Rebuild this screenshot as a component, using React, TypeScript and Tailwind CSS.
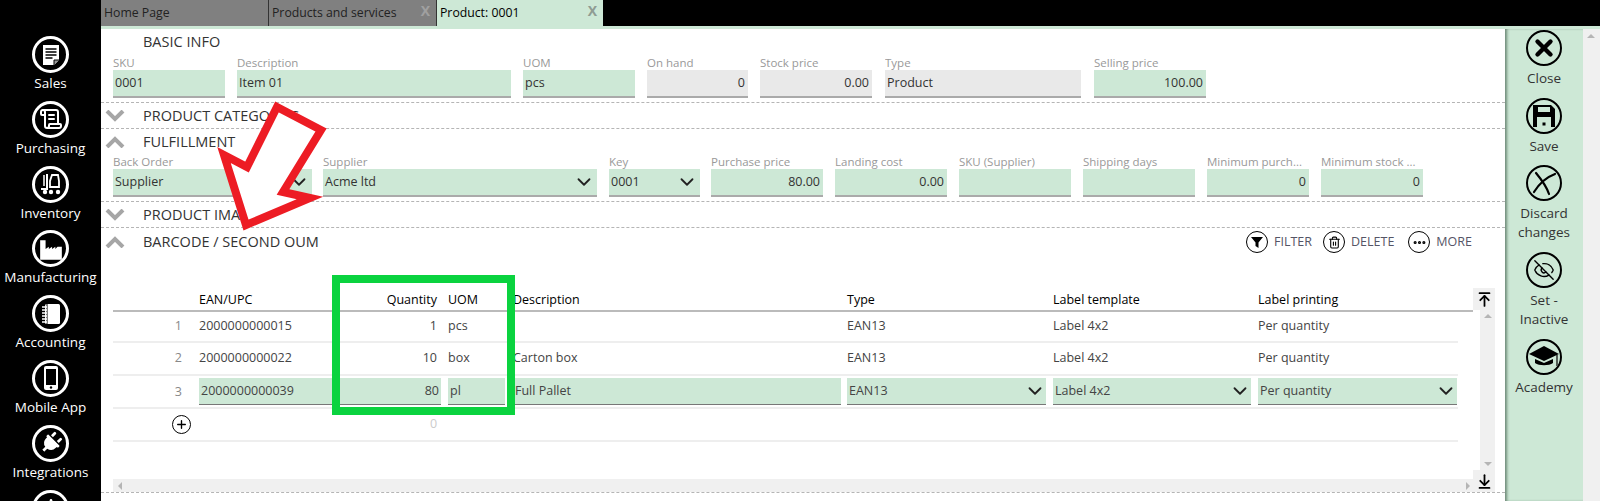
import { ChevronDown, Plus, X, EyeOff, Trash2, MoreHorizontal, ArrowUpToLine, ArrowDownToLine, ScrollText, Settings } from "lucide-react";
import { FaPlug } from "react-icons/fa";
import type { ReactNode } from "react";

const GREEN = "bg-[#cde8d6]";

const SalesIcon = () => (
  <svg width="24" height="24" viewBox="0 0 24 24">
    <path d="M4 2h16v15l-5 5H4z" fill="white" />
    <path d="M6.5 6h11M6.5 9h11M6.5 12h11M6.5 15h7" stroke="black" strokeWidth="1.3" />
    <path d="M15 22v-5h5" fill="#999999" stroke="black" strokeWidth="1" />
  </svg>
);
const ForkliftIcon = () => (
  <svg width="24" height="24" viewBox="0 0 24 24" fill="none" stroke="white" strokeWidth="2">
    <path d="M8 2v15H2" />
    <path d="M5 3v11" strokeWidth="1.5" />
    <path d="M11 15V9l2-6h6l1 6v6z" strokeWidth="1.8" />
    <circle cx="6" cy="20" r="2.2" fill="white" stroke="none" />
    <circle cx="12" cy="20" r="2.2" fill="white" stroke="none" />
    <circle cx="19" cy="20" r="2.2" fill="white" stroke="none" />
  </svg>
);
const FactoryIcon = () => (
  <svg width="26" height="26" viewBox="0 0 24 24">
    <path d="M2 22V4h5v8l3-2v2l3-2v2l3-2v2l2-2h4v12z" fill="white" />
  </svg>
);
const NotebookIcon = () => (
  <svg width="24" height="24" viewBox="0 0 24 24">
    <rect x="6" y="2" width="15" height="20" rx="1.5" fill="white" />
    <path d="M8 2v20" stroke="black" strokeWidth="1" />
    <path d="M3 5h5M3 8h5M3 11h5M3 14h5M3 17h5M3 20h5" stroke="white" strokeWidth="1.6" />
  </svg>
);
const PhoneIcon = () => (
  <svg width="24" height="26" viewBox="0 0 24 26">
    <rect x="5" y="1" width="14" height="24" rx="2" fill="white" />
    <rect x="7" y="4" width="10" height="16" fill="black" />
    <circle cx="12" cy="22.5" r="1.2" fill="black" />
  </svg>
);

// right panel glyphs
const FloppyIcon = () => (
  <svg width="24" height="24" viewBox="0 0 24 24">
    <path d="M1 1h18l4 4v18H1z" fill="black" />
    <rect x="6" y="3" width="12" height="5" fill="#cde8d6" />
    <rect x="5" y="13" width="14" height="10" fill="#cde8d6" />
    <rect x="10.5" y="18.5" width="3" height="3" fill="black" />
  </svg>
);
const DiscardIcon = () => (
  <svg width="30" height="30" viewBox="0 0 30 30" fill="none" stroke="black" strokeWidth="2.2" strokeLinecap="round">
    <path d="M7 5c5 6 10 12 13 21" />
    <path d="M26 6C18 9 10 16 5 24" />
  </svg>
);
const CapIcon = () => (
  <svg width="32" height="26" viewBox="0 0 32 26">
    <path d="M16 2 31 10 16 17 1 10z" fill="black" />
    <path d="M7 15v4c4 3 14 3 18 0v-4l-9 4z" fill="black" />
    <path d="M29 11v11" stroke="black" strokeWidth="1.2" />
  </svg>
);
const FunnelIcon = () => (
  <svg width="14" height="14" viewBox="0 0 14 14">
    <path d="M1 2h12L8.5 7.5V13l-3-2V7.5z" fill="black" />
  </svg>
);

const Chevron = ({ up }: { up?: boolean }) => (
  <svg width="20" height="12" viewBox="0 0 20 12" fill="none" stroke="#a6a6a6" strokeWidth="4">
    <path d={up ? "M2 11 10 3l8 8" : "M2 1l8 8 8-8"} />
  </svg>
);

const NAV = [
  { label: "Sales", icon: <SalesIcon /> },
  { label: "Purchasing", icon: <ScrollText size={24} strokeWidth={2} /> },
  { label: "Inventory", icon: <ForkliftIcon /> },
  { label: "Manufacturing", icon: <FactoryIcon /> },
  { label: "Accounting", icon: <NotebookIcon /> },
  { label: "Mobile App", icon: <PhoneIcon /> },
  { label: "Integrations", icon: <FaPlug size={22} className="rotate-45" /> },
  { label: "", icon: <Settings size={24} fill="white" stroke="black" /> },
];

function Field({ label, value, width, gray, right, select }: { label: string; value: string; width: string; gray?: boolean; right?: boolean; select?: boolean }) {
  return (
    <div className={width}>
      <div className="h-[15px] truncate text-[11.5px] leading-[15px] text-[#999999]">{label}</div>
      <div className={`flex h-[28px] items-center justify-between border-b-2 border-[#aaaaaa] px-[2px] text-[12.5px] text-[#333333] ${gray ? "bg-[#e9e9e9]" : GREEN}`}>
        <span className={right ? "ml-auto pr-[1px]" : ""}>{value}</span>
        {select && <ChevronDown size={22} className="text-[#222222]" />}
      </div>
    </div>
  );
}

function Section({ title, open, children, h }: { title: string; open?: boolean; children?: ReactNode; h: string }) {
  return (
    <div className={`${h} border-b border-dashed border-[#b5b5b5]`}>
      <div className="flex h-[26px] items-center">
        <div className="flex w-[29px] justify-end pr-[5px]">
          {open !== undefined && <Chevron up={open} />}
        </div>
        <span className="ml-[13px] text-[14.5px] text-[#333333]">{title}</span>
      </div>
      {children}
    </div>
  );
}

function ActionIcon({ icon, label, className }: { icon: ReactNode; label: string; className?: string }) {
  return (
    <div className={`flex items-center gap-[6px] ${className ?? ""}`}>
      <span className="flex h-[22px] w-[22px] items-center justify-center rounded-full border border-black">{icon}</span>
      <span className="text-[12.5px] text-[#555566]">{label}</span>
    </div>
  );
}

function SideAction({ icon, label, mb }: { icon: ReactNode; label: ReactNode; mb: string }) {
  return (
    <div className={`flex flex-col items-center ${mb}`}>
      <span className="flex h-[36px] w-[36px] items-center justify-center overflow-hidden rounded-full border-[2.5px] border-black">{icon}</span>
      <span className="mt-[3px] text-center text-[13.5px] leading-[19px] text-[#333333]">{label}</span>
    </div>
  );
}

const COLS = "grid grid-cols-[86px_238px_11px_57px_8px_334px_206px_205px_1fr]";

function TableRow({ n, ean, qty, uom, desc, type, tpl, print, h }: { n: string; ean: string; qty: string; uom: string; desc: string; type: string; tpl: string; print: string; h: string }) {
  return (
    <div className={`${COLS} ${h} items-center border-b-2 border-[#eeeeee] text-[12.5px] text-[#444444]`}>
      <span className="pr-[17px] text-right text-[#888888]">{n}</span>
      <span className="flex justify-between"><span>{ean}</span><span>{qty}</span></span>
      <span />
      <span>{uom}</span>
      <span />
      <span>{desc}</span>
      <span>{type}</span>
      <span>{tpl}</span>
      <span>{print}</span>
    </div>
  );
}

function RowSelect({ value, width }: { value: string; width: string }) {
  return (
    <div className={`${width} ${GREEN} flex h-[27px] items-center justify-between border-b border-[#777777] pl-[2px]`}>
      <span>{value}</span>
      <ChevronDown size={22} className="text-[#222222]" />
    </div>
  );
}

export default function App() {
  return (
    <div className="relative flex h-[501px] w-[1600px] overflow-hidden bg-black font-['Open_Sans',sans-serif]">
      {/* left nav */}
      <div className="w-[101px] shrink-0 pt-[36px]">
        {NAV.map((item, i) => (
          <div key={i} className="flex h-[64.8px] flex-col items-center text-white">
            <span className="flex h-[37px] w-[37px] shrink-0 items-center justify-center rounded-full border-[3px] border-white">{item.icon}</span>
            <span className="mt-[1px] text-[13.5px] leading-[19px] whitespace-nowrap">{item.label}</span>
          </div>
        ))}
      </div>

      <div className="flex min-w-0 flex-1 flex-col">
        {/* tabs */}
        <div className="flex h-[26px] shrink-0 text-[12.25px]">
          <div className="flex w-[168px] items-center border-r border-[#333333] bg-[#808080] pl-[3px] text-[#222222]">Home Page</div>
          <div className="relative flex w-[168px] items-center border-r border-[#333333] bg-[#808080] pl-[3px] text-[#222222]">
            Products and services
            <span className="absolute top-0 right-[6px] text-[14px] font-bold text-[#a0a0a0]">X</span>
          </div>
          <div className={`relative flex w-[166px] items-center ${GREEN} pl-[3px] text-black`}>
            Product: 0001
            <span className="absolute top-0 right-[6px] text-[14px] font-bold text-[#8f9c93]">X</span>
          </div>
        </div>
        <div className={`h-[3px] shrink-0 ${GREEN}`} />

        <div className="flex min-h-0 flex-1">
          {/* main panel */}
          <div className="w-[1404px] shrink-0 bg-white">
            <Section title="BASIC INFO" h="h-[74px]">
              <div className="flex gap-[12px] pl-[12px]">
                <Field label="SKU" value="0001" width="w-[112px]" />
                <Field label="Description" value="Item 01" width="w-[274px]" />
                <Field label="UOM" value="pcs" width="w-[112px]" />
                <Field label="On hand" value="0" width="w-[101px]" gray right />
                <Field label="Stock price" value="0.00" width="w-[112px]" gray right />
                <Field label="Type" value="Product" width="w-[196px] ml-px" gray />
                <Field label="Selling price" value="100.00" width="w-[112px] ml-px" right />
              </div>
            </Section>
            <Section title="PRODUCT CATEGORIES" open={false} h="h-[26px]" />
            <Section title="FULFILLMENT" open h="h-[73px]">
              <div className="-mt-[1px] flex gap-[12px] pl-[12px]">
                <Field label="Back Order" value="Supplier" width="w-[199px]" select />
                <Field label="Supplier" value="Acme ltd" width="w-[274px] -ml-px" select />
                <Field label="Key" value="0001" width="w-[91px]" select />
                <Field label="Purchase price" value="80.00" width="w-[112px] -ml-px" right />
                <Field label="Landing cost" value="0.00" width="w-[112px]" right />
                <Field label="SKU (Supplier)" value="" width="w-[112px]" />
                <Field label="Shipping days" value="" width="w-[112px]" />
                <Field label="Minimum purch..." value="0" width="w-[102px]" right />
                <Field label="Minimum stock ..." value="0" width="w-[102px]" right />
              </div>
            </Section>
            <Section title="PRODUCT IMAGES" open={false} h="h-[26px]" />
            <div className="h-[265px] border-b border-dashed border-[#b5b5b5]">
              <div className="flex h-[28px] items-center">
                <div className="flex w-[29px] justify-end pr-[5px]">
                  <Chevron up />
                </div>
                <span className="ml-[13px] text-[14.5px] text-[#333333]">BARCODE / SECOND OUM</span>
                <div className="ml-auto flex gap-[14px] pr-[33px]">
                  <ActionIcon icon={<FunnelIcon />} label="FILTER" className="-mr-[3px]" />
                  <ActionIcon icon={<Trash2 size={13} />} label="DELETE" />
                  <ActionIcon icon={<MoreHorizontal size={15} strokeWidth={3} />} label="MORE" />
                </div>
              </div>

              <div className="relative mt-[32px] h-[204px] pl-[12px]">
                <div className={`${COLS} h-[24px] w-[1360px] items-center border-b-2 border-[#bbbbbb] pt-[3px] text-[12.5px] font-medium text-black`}>
                  <span />
                  <span className="flex justify-between"><span>EAN/UPC</span><span>Quantity</span></span>
                  <span />
                  <span>UOM</span>
                  <span />
                  <span>Description</span>
                  <span>Type</span>
                  <span>Label template</span>
                  <span>Label printing</span>
                </div>
                <div className="w-[1345px]">
                  <TableRow h="h-[31px]" n="1" ean="2000000000015" qty="1" uom="pcs" desc="" type="EAN13" tpl="Label 4x2" print="Per quantity" />
                  <TableRow h="h-[33px]" n="2" ean="2000000000022" qty="10" uom="box" desc="Carton box" type="EAN13" tpl="Label 4x2" print="Per quantity" />
                  <div className="flex h-[33px] items-start border-b-2 border-[#eeeeee] pt-[2px] text-[12.5px] text-[#444444]">
                    <span className="w-[86px] self-center pr-[17px] text-right text-[#888888]">3</span>
                    <div className={`flex h-[27px] w-[242px] items-center justify-between border-b border-[#777777] px-[2px] ${GREEN}`}>
                      <span>2000000000039</span>
                      <span>80</span>
                    </div>
                    <div className={`ml-[7px] flex h-[27px] w-[57px] items-center border-b border-[#777777] px-[2px] ${GREEN}`}>pl</div>
                    <div className={`ml-[8px] flex h-[27px] w-[328px] items-center border-b border-[#777777] px-[2px] ${GREEN}`}>Full Pallet</div>
                    <RowSelect value="EAN13" width="ml-[6px] w-[199px]" />
                    <RowSelect value="Label 4x2" width="ml-[7px] w-[198px]" />
                    <RowSelect value="Per quantity" width="ml-[7px] w-[199px]" />
                  </div>
                  <div className="flex h-[33px] items-center border-b-2 border-[#eeeeee] text-[12.5px]">
                    <span className="ml-[59px] flex h-[19px] w-[19px] items-center justify-center rounded-full border border-black"><Plus size={13} strokeWidth={2.5} /></span>
                    <span className="ml-[239px] text-[#cccccc]">0</span>
                  </div>
                </div>
                {/* scrollbars */}
                <div className="absolute top-0 right-[10px] flex h-[204px] w-[22px] flex-col items-end">
                  <span className="flex h-[22px] w-[22px] items-center justify-center bg-[#f0f0f0]"><ArrowUpToLine size={17} strokeWidth={2.5} /></span>
                  <span className="relative w-[15px] flex-1 bg-[#f0f0f0]">
                    <span className="absolute top-[4px] left-[4px] border-x-[4px] border-b-[4px] border-x-transparent border-b-[#b5b5b5]" />
                    <span className="absolute bottom-[4px] left-[4px] border-x-[4px] border-t-[4px] border-x-transparent border-t-[#b5b5b5]" />
                  </span>
                  <span className="flex h-[22px] w-[22px] items-center justify-center bg-[#f0f0f0]"><ArrowDownToLine size={17} strokeWidth={2.5} /></span>
                </div>
                <div className="absolute right-[32px] bottom-0 left-[12px] h-[13px] bg-[#f0f0f0]">
                  <span className="absolute top-[3px] left-[5px] border-y-[4px] border-r-[4px] border-y-transparent border-r-[#b5b5b5]" />
                  <span className="absolute top-[3px] right-[3px] border-y-[4px] border-l-[4px] border-y-transparent border-l-[#b5b5b5]" />
                </div>
              </div>
            </div>
            <div className="h-[9px]" />
          </div>

          {/* right action panel */}
          <div className={`flex w-[78px] shrink-0 flex-col items-center pt-[1px] shadow-[inset_3px_0_3px_-1px_#6f8a78] ${GREEN}`}>
            <SideAction icon={<X size={26} strokeWidth={4} />} label="Close" mb="mb-[10px]" />
            <SideAction icon={<FloppyIcon />} label="Save" mb="mb-[9px]" />
            <SideAction icon={<DiscardIcon />} label={<>Discard<br />changes</>} mb="mb-[10px]" />
            <SideAction icon={<EyeOff size={22} strokeWidth={1.5} />} label={<>Set -<br />Inactive</>} mb="mb-[10px]" />
            <SideAction icon={<CapIcon />} label="Academy" mb="" />
          </div>

          {/* outer scrollbar */}
          <div className="relative w-[17px] shrink-0 bg-[#f0f0f0]">
            <span className="absolute top-[5px] left-[4px] border-x-[4px] border-b-[4px] border-x-transparent border-b-[#b5b5b5]" />
          </div>
        </div>
      </div>

      {/* annotation: red arrow */}
      <svg className="absolute top-0 left-0" width="1600" height="501" fill="none">
        <polygon points="277,107 321,130 283,192 310,198 246,225 224,155 247,167" fill="white" stroke="#ed1c24" strokeWidth="8" strokeLinejoin="miter" />
      </svg>
      {/* annotation: green box */}
      <div className="absolute top-[275px] left-[332px] h-[140px] w-[183px] border-[8px] border-[#0ad33f]" />
    </div>
  );
}
